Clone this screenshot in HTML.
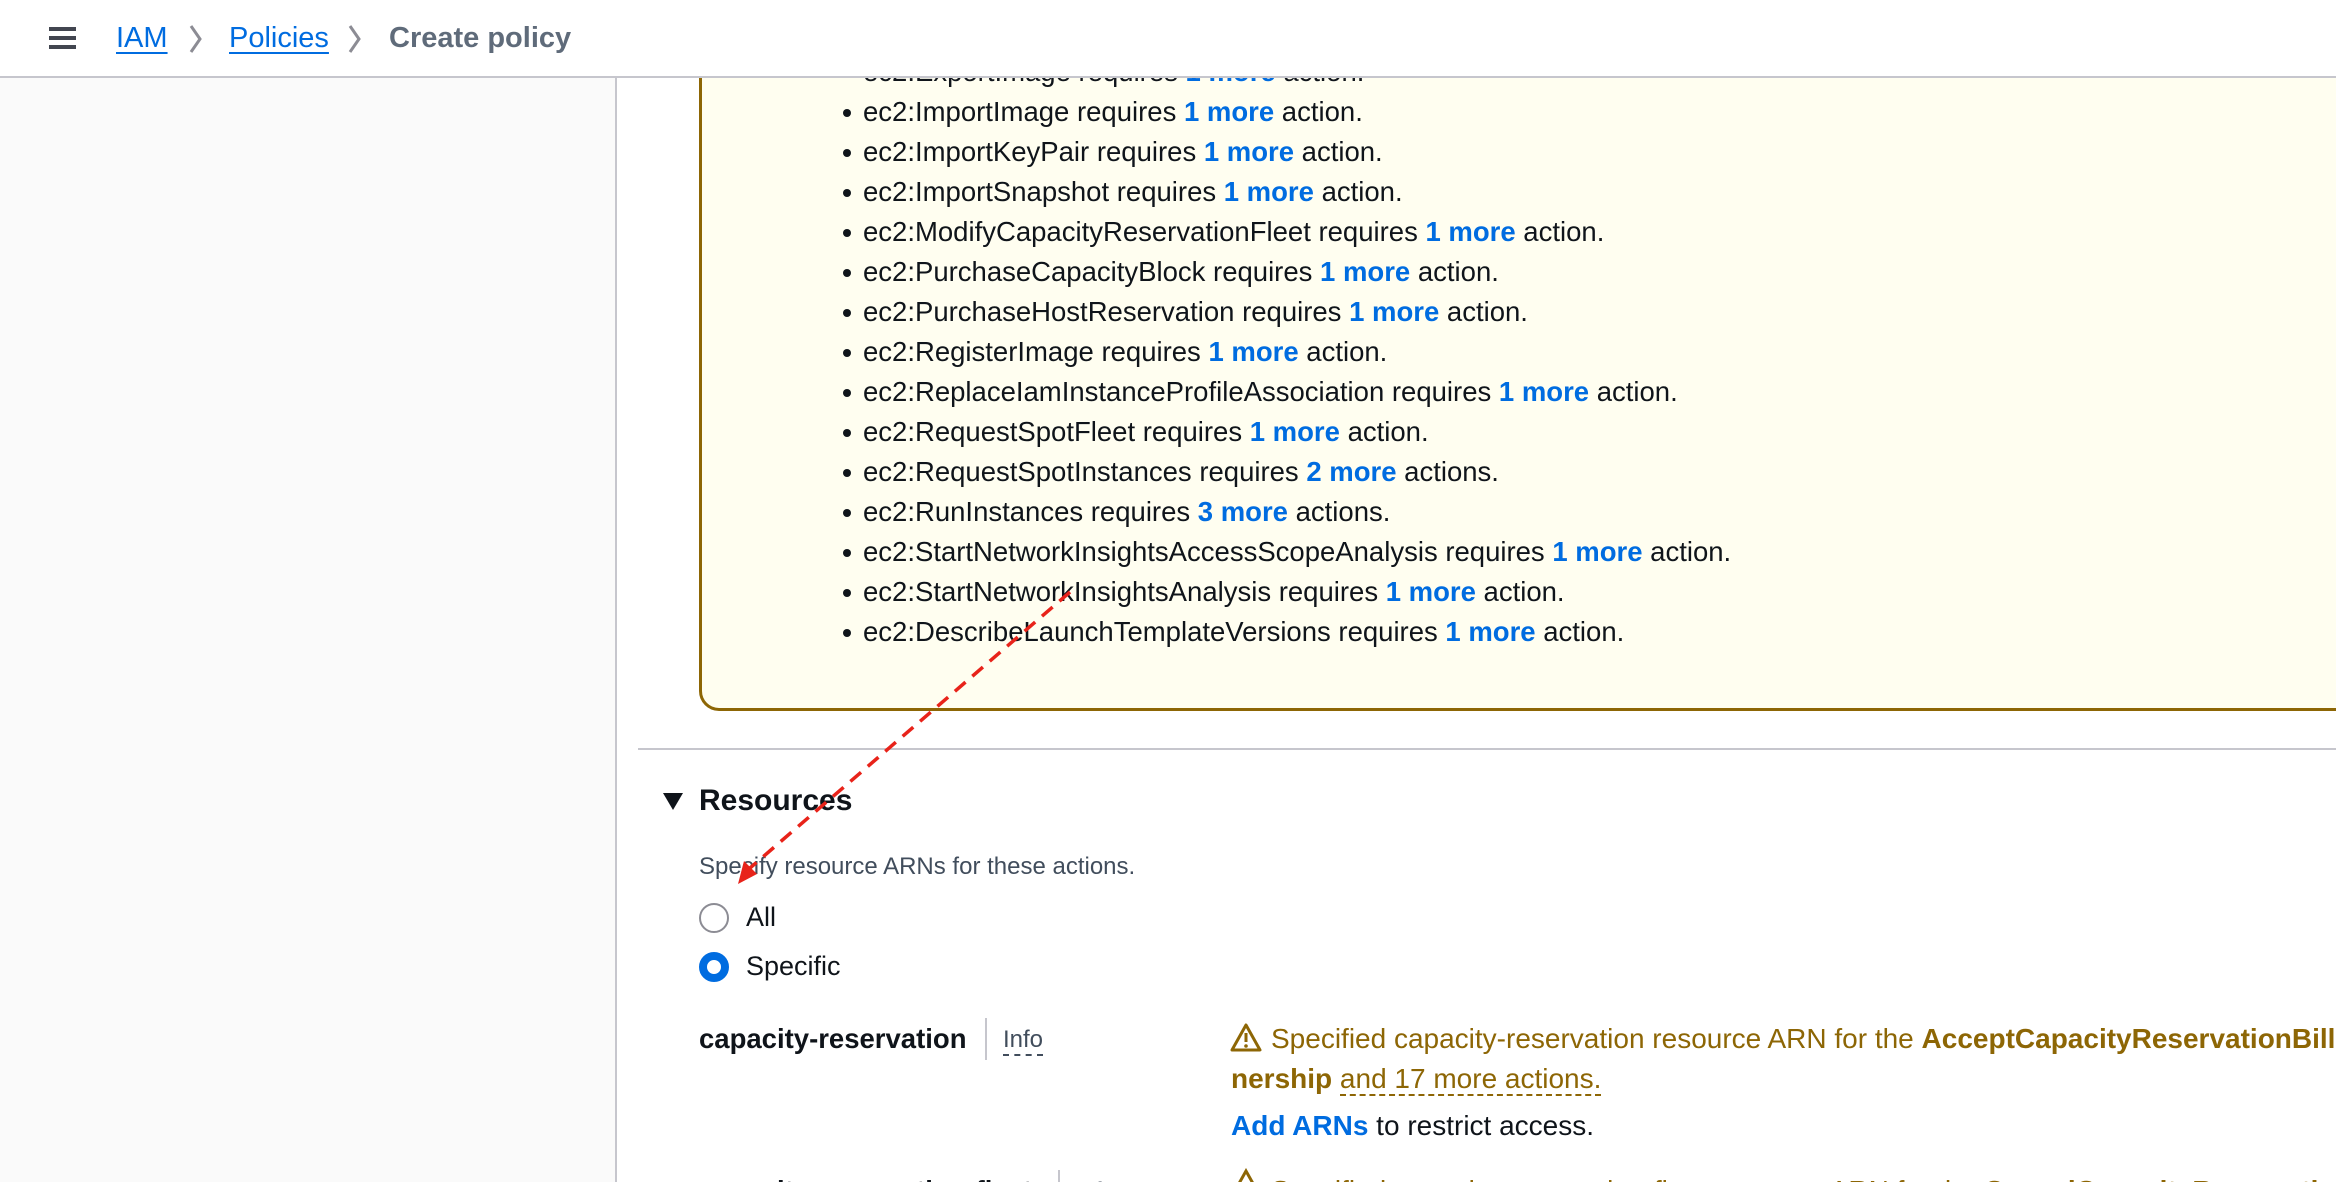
<!DOCTYPE html>
<html><head><meta charset="utf-8"><style>
*{margin:0;padding:0;box-sizing:border-box}
html,body{width:2336px;height:1182px;overflow:hidden}
body{background:#fff;font-family:"Liberation Sans",sans-serif;color:#0f141a;position:relative}
#wrap{position:absolute;left:0;top:0;width:2336px;height:1182px;overflow:hidden}
.abs{position:absolute;white-space:nowrap}
.hdr{position:absolute;left:0;top:0;width:2336px;height:78px;background:#fff;border-bottom:2px solid #c6c6cd;z-index:5}
.side{position:absolute;left:0;top:78px;width:617px;height:1104px;background:#fafafa;border-right:2px solid #c6c6cd}
.box{position:absolute;left:699px;top:-40px;width:1700px;height:751px;background:#fffef0;border:3px solid #8d6605;border-radius:20px}
ul{position:absolute;left:863px;top:52px;list-style:none;font-size:27.5px;line-height:40px}
li{position:relative;white-space:nowrap}
li:before{content:"";position:absolute;left:-20px;top:17px;width:8px;height:8px;border-radius:50%;background:#0f141a}
.l{color:#006ce0;font-weight:bold}
.bc{font-size:29px;top:22px}
.bc a{color:#006ce0;text-decoration:underline;text-underline-offset:5px;text-decoration-thickness:2px}
.w{color:#8d6605}
</style></head><body><div id="wrap">
<div class="side"></div>
<div class="box"></div>
<ul>
<li>ec2:ExportImage requires <span class="l">1 more</span> action.</li>
<li>ec2:ImportImage requires <span class="l">1 more</span> action.</li>
<li>ec2:ImportKeyPair requires <span class="l">1 more</span> action.</li>
<li>ec2:ImportSnapshot requires <span class="l">1 more</span> action.</li>
<li>ec2:ModifyCapacityReservationFleet requires <span class="l">1 more</span> action.</li>
<li>ec2:PurchaseCapacityBlock requires <span class="l">1 more</span> action.</li>
<li>ec2:PurchaseHostReservation requires <span class="l">1 more</span> action.</li>
<li>ec2:RegisterImage requires <span class="l">1 more</span> action.</li>
<li>ec2:ReplaceIamInstanceProfileAssociation requires <span class="l">1 more</span> action.</li>
<li>ec2:RequestSpotFleet requires <span class="l">1 more</span> action.</li>
<li>ec2:RequestSpotInstances requires <span class="l">2 more</span> actions.</li>
<li>ec2:RunInstances requires <span class="l">3 more</span> actions.</li>
<li>ec2:StartNetworkInsightsAccessScopeAnalysis requires <span class="l">1 more</span> action.</li>
<li>ec2:StartNetworkInsightsAnalysis requires <span class="l">1 more</span> action.</li>
<li>ec2:DescribeLaunchTemplateVersions requires <span class="l">1 more</span> action.</li>
</ul>
<div class="hdr">
 <div class="abs" style="left:49px;top:27px;width:27px;height:4px;background:#424650"></div>
 <div class="abs" style="left:49px;top:36px;width:27px;height:4px;background:#424650"></div>
 <div class="abs" style="left:49px;top:45px;width:27px;height:4px;background:#424650"></div>
 <div class="abs bc" style="left:116px"><a>IAM</a></div>
 <svg class="abs" style="left:188px;top:24px" width="16" height="30"><path d="M3 2 L12 15 L3 28" fill="none" stroke="#8c8c94" stroke-width="3"/></svg>
 <div class="abs bc" style="left:229px"><a>Policies</a></div>
 <svg class="abs" style="left:347px;top:24px" width="16" height="30"><path d="M3 2 L12 15 L3 28" fill="none" stroke="#8c8c94" stroke-width="3"/></svg>
 <div class="abs bc" style="left:389px;color:#5f6b7a;font-weight:bold">Create policy</div>
</div>
<div class="abs" style="left:638px;top:748px;width:1700px;height:2px;background:#c6c6cd"></div>
<svg class="abs" style="left:663px;top:793px" width="20" height="18"><path d="M0 0 H20 L10 17 Z" fill="#0f141a"/></svg>
<div class="abs" style="left:699px;top:784px;font-size:30px;font-weight:bold">Resources</div>
<div class="abs" style="left:699px;top:853px;font-size:24px;color:#414d5c">Specify resource ARNs for these actions.</div>
<div class="abs" style="left:699px;top:903px;width:30px;height:30px;border:2px solid #8c8c94;border-radius:50%"></div>
<div class="abs" style="left:746px;top:902px;font-size:27px">All</div>
<div class="abs" style="left:699px;top:952px;width:30px;height:30px;border:8px solid #006ce0;border-radius:50%"></div>
<div class="abs" style="left:746px;top:951px;font-size:27px">Specific</div>
<div class="abs" style="left:699px;top:1023px;font-size:27.5px;font-weight:bold">capacity-reservation</div>
<div class="abs" style="left:985px;top:1018px;width:2px;height:42px;background:#c6c6cd"></div>
<div class="abs" style="left:1003px;top:1026px;font-size:24px;color:#414d5c;border-bottom:2px dashed #414d5c;line-height:28px">Info</div>
<svg class="abs" style="left:1230px;top:1022px" width="32" height="30"><path d="M16 3 L30 28 H2 Z" fill="none" stroke="#8d6605" stroke-width="3" stroke-linejoin="round"/><path d="M16 11 V20" stroke="#8d6605" stroke-width="3"/><circle cx="16" cy="24" r="1.8" fill="#8d6605"/></svg>
<div class="abs w" style="left:1271px;top:1023px;font-size:28px">Specified capacity-reservation resource ARN for the <b>AcceptCapacityReservationBillingOwnership</b></div>
<div class="abs w" style="left:1231px;top:1063px;font-size:28px"><b>nership</b> <span style="border-bottom:2px dashed #8d6605">and 17 more actions.</span></div>
<div class="abs" style="left:1231px;top:1110px;font-size:28px"><span class="l">Add ARNs</span> to restrict access.</div>
<div class="abs" style="left:699px;top:1175px;font-size:27.5px;font-weight:bold">capacity-reservation-fleet</div>
<div class="abs" style="left:1058px;top:1170px;width:2px;height:30px;background:#c6c6cd"></div>
<div class="abs" style="left:1075px;top:1178px;font-size:24px;color:#414d5c">Info</div>
<svg class="abs" style="left:1230px;top:1168px" width="32" height="30"><path d="M16 3 L30 28 H2 Z" fill="none" stroke="#8d6605" stroke-width="3"/></svg>
<div class="abs w" style="left:1271px;top:1175px;font-size:28px">Specified capacity-reservation-fleet resource ARN for the <b>CancelCapacityReservationFleets</b></div>
<svg class="abs" style="left:0;top:0;z-index:3" width="2336" height="1182"><path d="M1070 592 L750 868" stroke="#e8231a" stroke-width="3.5" stroke-dasharray="14 9" fill="none"/><path d="M738 884 L744 861 L757 874 Z" fill="#e8231a"/></svg>
</div></body></html>
